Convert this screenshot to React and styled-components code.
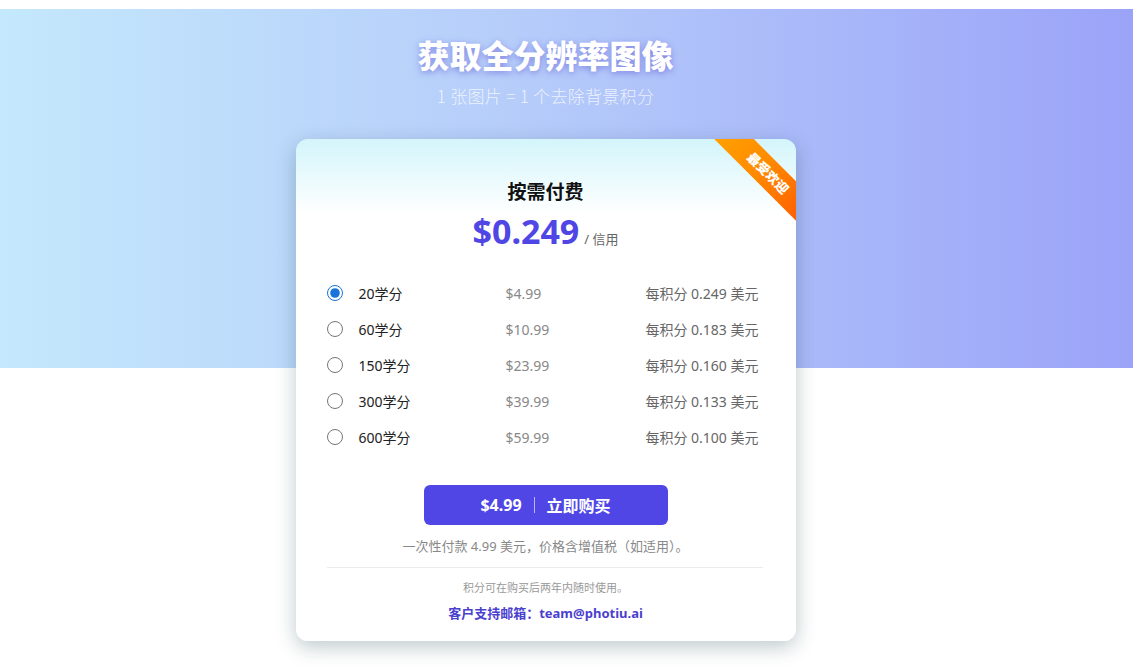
import React, { useState } from 'react';
import styled, { createGlobalStyle } from 'styled-components';

const GlobalStyle = createGlobalStyle`
  body {
    margin: 0;
    padding-top: 9px;
    background: #fff;
    font-family: "Segoe UI", "Noto Sans", "Noto Sans CJK SC", sans-serif;
  }
`

const Hero = styled.section`
  display: flex;
  flex-direction: column;
  align-items: center;
  padding: 25px 42px 30px 0;
  background: linear-gradient(90deg, #c4e8fc 0%, #b6cdfa 45%, #9ba3f8 100%) top / 100% 359px no-repeat;
`

const Title = styled.h1`
  margin: 0;
  font-size: 32px;
  line-height: 40px;
  font-weight: 800;
  color: #fff;
  font-family: "Noto Sans CJK SC", sans-serif;
  text-shadow: 0 2px 6px rgba(90, 80, 210, 0.55);
`

const Subtitle = styled.p`
  margin: 11px 0 0;
  font-size: 17px;
  line-height: 22px;
  font-weight: 300;
  letter-spacing: 0.3px;
  color: rgba(255, 255, 255, 0.75);
  font-family: "Noto Sans CJK SC", sans-serif;
`

const Card = styled.div`
  position: relative;
  overflow: hidden;
  width: 500px;
  margin-top: 32px;
  padding: 38px 31px 18px;
  box-sizing: border-box;
  border-radius: 12px;
  background: linear-gradient(180deg, #d3f5fb 0px, #ffffff 75px);
  box-shadow: 0 6px 20px rgba(20, 60, 70, 0.28);
  display: flex;
  flex-direction: column;
  align-items: center;
`

const Ribbon = styled.div`
  position: absolute;
  top: 20px;
  left: 392px;
  width: 160px;
  height: 28px;
  transform: rotate(45deg);
  background: linear-gradient(90deg, #ffa800, #ff8a00 45%, #ff4e00);
  color: #fff;
  font-size: 13px;
  font-weight: 800;
  line-height: 28px;
  text-align: center;
  font-family: "Noto Sans CJK SC", sans-serif;
`

const PlanName = styled.h2`
  margin: 0;
  font-size: 19px;
  line-height: 28px;
  font-weight: 700;
  color: #111;
  font-family: "Noto Sans CJK SC", sans-serif;
`

const PriceLine = styled.div`
  margin-top: 4px;
  display: flex;
  align-items: baseline;
  gap: 5px;
  line-height: 44px;
`

const BigPrice = styled.span`
  font-size: 34px;
  font-weight: 700;
  color: #4f46e5;
  font-family: "Noto Sans", sans-serif;
`

const Unit = styled.span`
  font-size: 13px;
  color: #666;
`

const Options = styled.div`
  align-self: stretch;
  margin-top: 14px;
  display: flex;
  flex-direction: column;
`

const Option = styled.label`
  display: grid;
  grid-template-columns: 32px 147px 1fr auto;
  align-items: center;
  height: 36px;
  padding-right: 6px;
  font-size: 14px;
  cursor: pointer;
`

const Radio = styled.input`
  margin: 0;
  width: 16px;
  height: 16px;
  accent-color: #1a73d9;
`

const Credits = styled.span`
  color: #222;
`

const Price = styled.span`
  color: #888;
`

const PerCredit = styled.span`
  color: #666;
  text-align: right;
`

const BuyButton = styled.button`
  margin-top: 30px;
  width: 244px;
  height: 40px;
  border: none;
  border-radius: 6px;
  background: #4f46e5;
  color: #fff;
  font-size: 16px;
  font-weight: 700;
  font-family: "Noto Sans", "Noto Sans CJK SC", sans-serif;
  display: flex;
  align-items: center;
  justify-content: center;
  gap: 12px;
  cursor: pointer;
`

const Sep = styled.span`
  width: 1px;
  height: 16px;
  background: rgba(255, 255, 255, 0.6);
`

const Note = styled.p`
  margin: 11px 0 0;
  font-size: 13px;
  line-height: 20px;
  color: #888;
`

const Divider = styled.hr`
  align-self: stretch;
  margin: 11px 2px 0 0;
  border: none;
  border-top: 1px solid #ececec;
`

const Small = styled.p`
  margin: 11px 0 0;
  font-size: 11px;
  line-height: 18px;
  color: #999;
`

const Support = styled.p`
  margin: 6px 0 0;
  font-size: 13px;
  line-height: 20px;
  font-weight: 700;
  color: #4b3fcf;
  font-family: "Noto Sans", "Noto Sans CJK SC", sans-serif;
`

const plans = [
  { credits: 20, price: '4.99', per: '0.249' },
  { credits: 60, price: '10.99', per: '0.183' },
  { credits: 150, price: '23.99', per: '0.160' },
  { credits: 300, price: '39.99', per: '0.133' },
  { credits: 600, price: '59.99', per: '0.100' },
];

const App = () => {
  const [selected, setSelected] = useState(0);
  const plan = plans[selected];

  return (
    <>
      <GlobalStyle />
      <Hero>
        <Title>获取全分辨率图像</Title>
        <Subtitle>1 张图片 = 1 个去除背景积分</Subtitle>
        <Card>
          <Ribbon>最受欢迎</Ribbon>
          <PlanName>按需付费</PlanName>
          <PriceLine>
            <BigPrice>${plan.per}</BigPrice>
            <Unit>/ 信用</Unit>
          </PriceLine>
          <Options>
            {plans.map((p, i) => (
              <Option key={p.credits}>
                <Radio type="radio" name="plan" checked={selected === i} onChange={() => setSelected(i)} />
                <Credits>{p.credits}学分</Credits>
                <Price>${p.price}</Price>
                <PerCredit>每积分 {p.per} 美元</PerCredit>
              </Option>
            ))}
          </Options>
          <BuyButton type="button">
            <span>${plan.price}</span>
            <Sep />
            <span>立即购买</span>
          </BuyButton>
          <Note>一次性付款 {plan.price} 美元，价格含增值税（如适用）。</Note>
          <Divider />
          <Small>积分可在购买后两年内随时使用。</Small>
          <Support>客户支持邮箱：team@photiu.ai</Support>
        </Card>
      </Hero>
    </>
  );
};

export default App;
